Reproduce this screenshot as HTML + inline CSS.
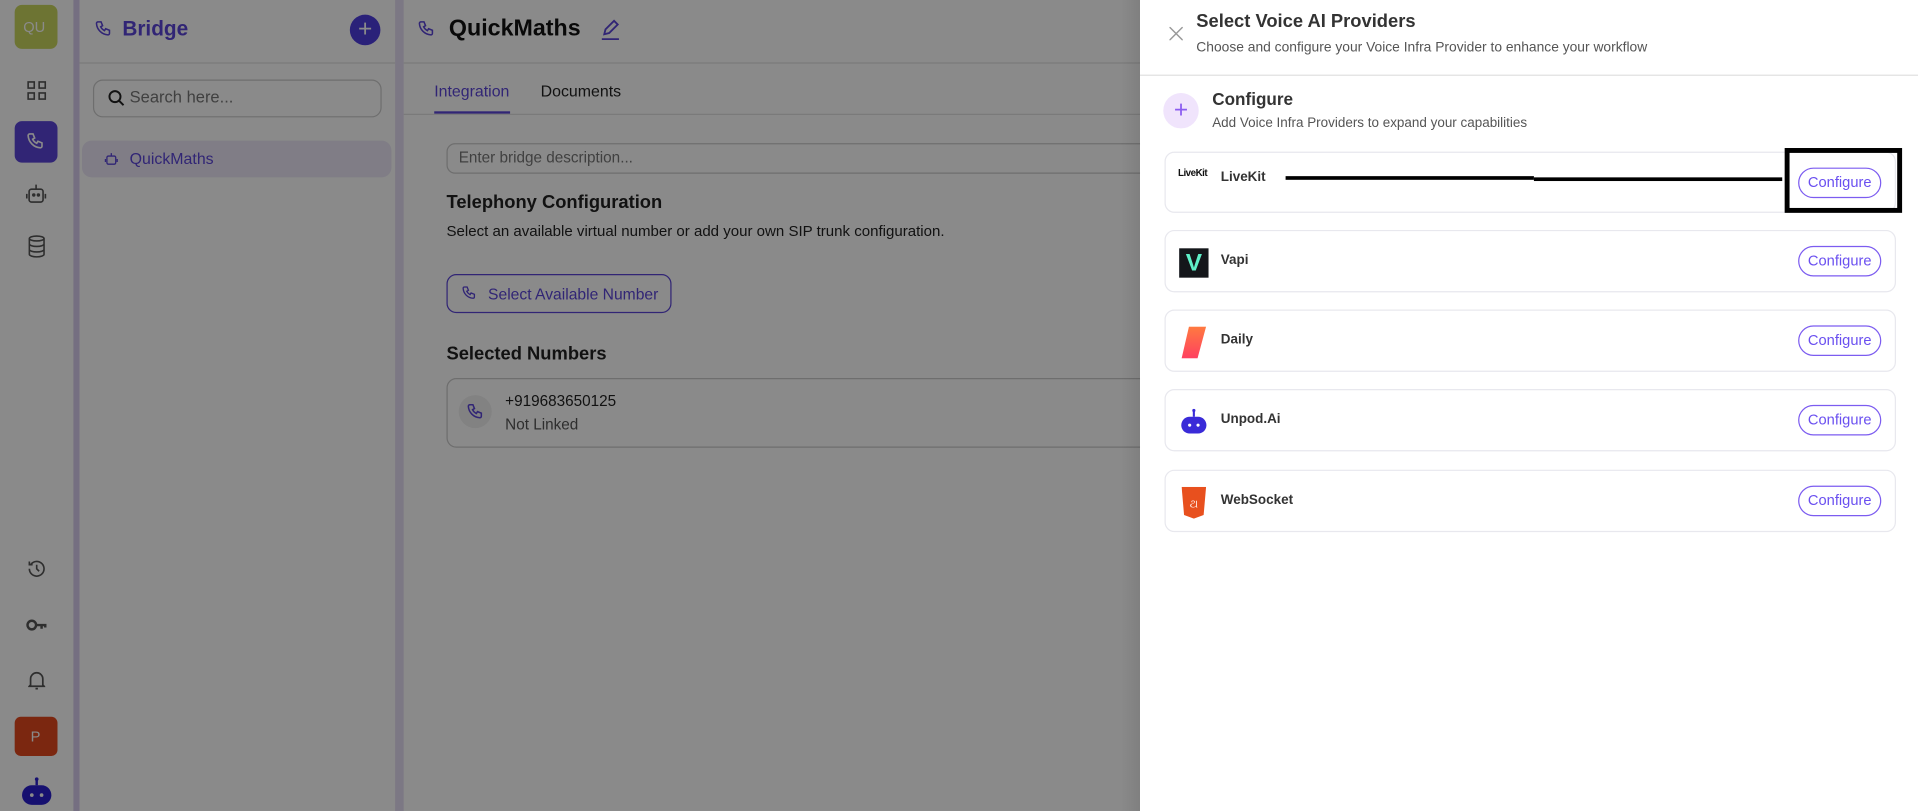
<!DOCTYPE html>
<html><head><meta charset="utf-8"><style>
*{box-sizing:border-box;margin:0;padding:0}
html,body{width:1918px;height:810px;overflow:hidden;background:#fff;font-family:"Liberation Sans",sans-serif}
#s{position:absolute;left:0;top:0;width:1568px;height:663px;transform:scale(1.22321);transform-origin:0 0;background:#fff}
.a{position:absolute}
.t{position:absolute;white-space:nowrap}
.ov{position:absolute;left:0;top:0;width:932px;height:663px;background:rgba(0,0,0,.46)}
.card{position:absolute;left:952px;width:598px;height:51px;border:1px solid #e8e8ee;border-radius:8px;background:#fff}
.btn{position:absolute;left:517px;top:12px;width:68px;height:25px;border:1px solid #7c5cf0;border-radius:13px;color:#6a4ff0;font-size:12px;text-align:center;line-height:23px}
.nm{position:absolute;left:45px;top:18px;font-size:11px;font-weight:bold;color:#333}
</style></head><body><div id="s">
<!-- rail -->
<div class="a" style="left:12px;top:4px;width:35px;height:36px;border-radius:6px;background:#c9d65e"></div>
<div class="t" style="left:19px;top:15px;color:#fff;font-size:12px">QU</div>
<svg class="a" style="left:22px;top:66px" width="16" height="16" viewBox="0 0 16 16" fill="none" stroke="#555" stroke-width="1.3"><rect x="1" y="1" width="5" height="5"/><rect x="10" y="1" width="5" height="5"/><rect x="1" y="10" width="5" height="5"/><rect x="10" y="10" width="5" height="5"/></svg>
<div class="a" style="left:12px;top:99px;width:35px;height:34px;border-radius:6px;background:#5b45d8"></div>
<svg class="a" style="left:21px;top:107px" width="16" height="17" viewBox="0 0 24 24" fill="none" stroke="#fff" stroke-width="2"><path d="M5 3h4l2 5-2.5 1.5a11 11 0 005 5L15 12l5 2v4a2 2 0 01-2 2A16 16 0 013 5a2 2 0 012-2z"/></svg>
<svg class="a" style="left:20px;top:149px" width="19" height="19" viewBox="0 0 20 20" fill="none" stroke="#555" stroke-width="1.4"><rect x="4" y="6" width="12" height="11" rx="2"/><path d="M10 6V2M2 10v4M18 10v4"/><circle cx="8" cy="11" r=".8" fill="#555"/><circle cx="12" cy="11" r=".8" fill="#555"/></svg>
<svg class="a" style="left:22px;top:192px" width="16" height="19" viewBox="0 0 16 19" fill="none" stroke="#555" stroke-width="1.3"><ellipse cx="8" cy="3" rx="6" ry="2"/><path d="M2 3v13c0 1 2.7 2 6 2s6-1 6-2V3M2 7.5c0 1 2.7 2 6 2s6-1 6-2M2 12c0 1 2.7 2 6 2s6-1 6-2"/></svg>
<svg class="a" style="left:22px;top:457px" width="16" height="16" viewBox="0 0 24 24" fill="none" stroke="#555" stroke-width="2"><path d="M3 12a9 9 0 109-9 9 9 0 00-7 3.5M3 3v4h4M12 7v5l3 3"/></svg>
<svg class="a" style="left:21px;top:505px" width="18" height="12" viewBox="0 0 18 12" fill="none" stroke="#555" stroke-width="2"><circle cx="5" cy="6" r="3.5"/><path d="M8.5 6H17M13 6v3M16 6v2"/></svg>
<svg class="a" style="left:23px;top:548px" width="14" height="16" viewBox="0 0 14 16" fill="none" stroke="#555" stroke-width="1.4"><path d="M2 12V7a5 5 0 0110 0v5l1 1H1zM6 15h2"/></svg>
<div class="a" style="left:12px;top:586px;width:35px;height:32px;border-radius:5px;background:#e3491f"></div>
<div class="t" style="left:25px;top:595px;color:#fff;font-size:12px">P</div>
<svg class="a" style="left:16px;top:633px" width="28" height="28" viewBox="0 0 28 28"><circle cx="14" cy="4" r="1.5" fill="#2a1ed0"/><path d="M14 5v4" stroke="#2a1ed0" stroke-width="2"/><rect x="2" y="9" width="24" height="16" rx="8" fill="#2a1ed0"/><circle cx="10" cy="17" r="1.5" fill="#fff"/><circle cx="18" cy="17" r="1.5" fill="#fff"/></svg>
<div class="a" style="left:60px;top:0;width:5px;height:663px;background:#d8cdee"></div>
<!-- sidebar -->
<svg class="a" style="left:77px;top:16px" width="15" height="15" viewBox="0 0 24 24" fill="none" stroke="#5b45d8" stroke-width="2"><path d="M5 3h4l2 5-2.5 1.5a11 11 0 005 5L15 12l5 2v4a2 2 0 01-2 2A16 16 0 013 5a2 2 0 012-2z"/></svg>
<div class="t" style="left:100px;top:14px;font-size:17px;font-weight:bold;color:#5b45d8">Bridge</div>
<div class="a" style="left:286px;top:12px;width:25px;height:25px;border-radius:50%;background:#4f3ee0;color:#fff;font-size:20px;text-align:center;line-height:24px">+</div>
<div class="a" style="left:65px;top:51px;width:258px;height:1px;background:#e2e2e2"></div>
<div class="a" style="left:76px;top:65px;width:236px;height:31px;border:1px solid #ccc;border-radius:8px"></div>
<svg class="a" style="left:88px;top:73px" width="14" height="14" viewBox="0 0 14 14" fill="none" stroke="#222" stroke-width="1.6"><circle cx="6" cy="6" r="4.5"/><path d="M9.5 9.5L13 13"/></svg>
<div class="t" style="left:106px;top:72px;font-size:13.5px;color:#777">Search here...</div>
<div class="a" style="left:67px;top:115px;width:253px;height:30px;border-radius:8px;background:#ece8f8"></div>
<svg class="a" style="left:85px;top:124px" width="12" height="12" viewBox="0 0 20 20" fill="none" stroke="#5b45d8" stroke-width="1.8"><rect x="4" y="6" width="12" height="11" rx="2"/><path d="M10 6V2M2 10v4M18 10v4"/></svg>
<div class="t" style="left:106px;top:122px;font-size:13px;color:#5b45d8">QuickMaths</div>
<div class="a" style="left:323px;top:0;width:7px;height:663px;background:#e6def4"></div>
<!-- main -->
<svg class="a" style="left:341px;top:16px" width="15" height="15" viewBox="0 0 24 24" fill="none" stroke="#5b45d8" stroke-width="2"><path d="M5 3h4l2 5-2.5 1.5a11 11 0 005 5L15 12l5 2v4a2 2 0 01-2 2A16 16 0 013 5a2 2 0 012-2z"/></svg>
<div class="t" style="left:367px;top:13px;font-size:19px;font-weight:bold;color:#111">QuickMaths</div>
<svg class="a" style="left:490px;top:15px" width="18" height="18" viewBox="0 0 18 18" fill="none" stroke="#5b45d8" stroke-width="1.5"><path d="M4 13l1-4 7-7 3 3-7 7zM2 17h14"/></svg>
<div class="a" style="left:330px;top:51px;width:602px;height:1px;background:#e2e2e2"></div>
<div class="t" style="left:355px;top:67px;font-size:13px;color:#5b45d8">Integration</div>
<div class="a" style="left:355px;top:91px;width:62px;height:2px;background:#5b45d8"></div>
<div class="t" style="left:442px;top:67px;font-size:13px;color:#222">Documents</div>
<div class="a" style="left:330px;top:93px;width:602px;height:1px;background:#e2e2e2"></div>
<div class="a" style="left:365px;top:117px;width:600px;height:25px;border:1px solid #ccc;border-radius:7px"></div>
<div class="t" style="left:375px;top:122px;font-size:12.5px;color:#777">Enter bridge description...</div>
<div class="t" style="left:365px;top:157px;font-size:15px;font-weight:bold;color:#222">Telephony Configuration</div>
<div class="t" style="left:365px;top:182px;font-size:12.3px;color:#222">Select an available virtual number or add your own SIP trunk configuration.</div>
<div class="a" style="left:365px;top:224px;width:184px;height:32px;border:1px solid #5b45d8;border-radius:8px"></div>
<svg class="a" style="left:377px;top:233px" width="13" height="13" viewBox="0 0 24 24" fill="none" stroke="#5b45d8" stroke-width="2"><path d="M5 3h4l2 5-2.5 1.5a11 11 0 005 5L15 12l5 2v4a2 2 0 01-2 2A16 16 0 013 5a2 2 0 012-2z"/></svg>
<div class="t" style="left:399px;top:233px;font-size:12.8px;color:#5b45d8">Select Available Number</div>
<div class="t" style="left:365px;top:281px;font-size:15px;font-weight:bold;color:#222">Selected Numbers</div>
<div class="a" style="left:365px;top:309px;width:600px;height:57px;border:1px solid #ccc;border-radius:8px"></div>
<div class="a" style="left:375px;top:323px;width:27px;height:27px;border-radius:50%;background:#f0f0f0"></div>
<svg class="a" style="left:381px;top:329px" width="15" height="15" viewBox="0 0 24 24" fill="none" stroke="#5b45d8" stroke-width="2"><path d="M5 3h4l2 5-2.5 1.5a11 11 0 005 5L15 12l5 2v4a2 2 0 01-2 2A16 16 0 013 5a2 2 0 012-2z"/></svg>
<div class="t" style="left:413px;top:321px;font-size:12.5px;color:#222">+919683650125</div>
<div class="t" style="left:413px;top:340px;font-size:12.5px;color:#555">Not Linked</div>
<div class="ov"></div>
<div class="a" style="left:916px;top:0;width:16px;height:663px;background:linear-gradient(90deg,rgba(0,0,0,0),rgba(0,0,0,.08))"></div>
<!-- drawer -->
<div class="a" style="left:932px;top:0;width:636px;height:663px;background:#fff">
<svg class="a" style="left:24px;top:22px" width="11" height="11" viewBox="0 0 11 11" stroke="#999" stroke-width="1.2"><path d="M0 0l11 11M11 0L0 11"/></svg>
<div class="t" style="left:46px;top:9px;font-size:15px;font-weight:bold;color:#333">Select Voice AI Providers</div>
<div class="t" style="left:46px;top:33px;font-size:11.3px;color:#555">Choose and configure your Voice Infra Provider to enhance your workflow</div>
<div class="a" style="left:0;top:61px;width:636px;height:1px;background:#e0e0e0"></div>
<div class="a" style="left:19px;top:76px;width:29px;height:29px;border-radius:50%;background:#f0e4fc;color:#8b5cf0;font-size:20px;text-align:center;line-height:28px">+</div>
<div class="t" style="left:59px;top:73px;font-size:14px;font-weight:bold;color:#333">Configure</div>
<div class="t" style="left:59px;top:95px;font-size:11px;color:#555">Add Voice Infra Providers to expand your capabilities</div>
</div>
<div class="card" style="top:124px;height:50px"><div class="t" style="left:10px;top:12px;font-size:8px;font-weight:bold;letter-spacing:-.4px;color:#111">LiveKit</div><div class="nm" style="top:14px">LiveKit</div><div class="btn">Configure</div></div>
<div class="a" style="left:1051px;top:144px;width:203px;height:3px;background:#000"></div>
<div class="a" style="left:1254px;top:145px;width:203px;height:3px;background:#000"></div>
<div class="a" style="left:1459px;top:121px;width:96px;height:53px;border:4px solid #000"></div>
<div class="card" style="top:188px"><div class="a" style="left:11px;top:14px;width:24px;height:24px;background:#14161a;color:#5ff0c8;font-weight:bold;font-size:20px;text-align:center;line-height:24px">V</div><div class="nm">Vapi</div><div class="btn">Configure</div></div>
<div class="card" style="top:253px"><svg class="a" style="left:11px;top:13px" width="24" height="26" viewBox="0 0 24 26"><defs><linearGradient id="g" x1="0" y1="1" x2="0" y2="0"><stop offset="0" stop-color="#ff4060"/><stop offset="1" stop-color="#ff7a40"/></linearGradient></defs><path d="M8 0h14L15 26H2z" fill="url(#g)"/></svg><div class="nm">Daily</div><div class="btn">Configure</div></div>
<div class="card" style="top:318px"><svg class="a" style="left:11px;top:14px" width="24" height="24" viewBox="0 0 28 28"><circle cx="14" cy="3" r="1.5" fill="#3a2bd8"/><path d="M14 4v5" stroke="#3a2bd8" stroke-width="2"/><rect x="2" y="9" width="24" height="16" rx="8" fill="#3a2bd8"/><circle cx="10" cy="17" r="1.5" fill="#fff"/><circle cx="18" cy="17" r="1.5" fill="#fff"/></svg><div class="nm">Unpod.Ai</div><div class="btn">Configure</div></div>
<div class="card" style="top:384px"><svg class="a" style="left:13px;top:13px" width="20" height="26" viewBox="0 0 20 26"><path d="M0 0h20l-2 23-8 3-8-3z" fill="#e8501e"/><text x="10" y="17" font-size="9" fill="#fff" text-anchor="middle" font-family="Liberation Sans">ଥ</text></svg><div class="nm">WebSocket</div><div class="btn">Configure</div></div>
</div></body></html>
